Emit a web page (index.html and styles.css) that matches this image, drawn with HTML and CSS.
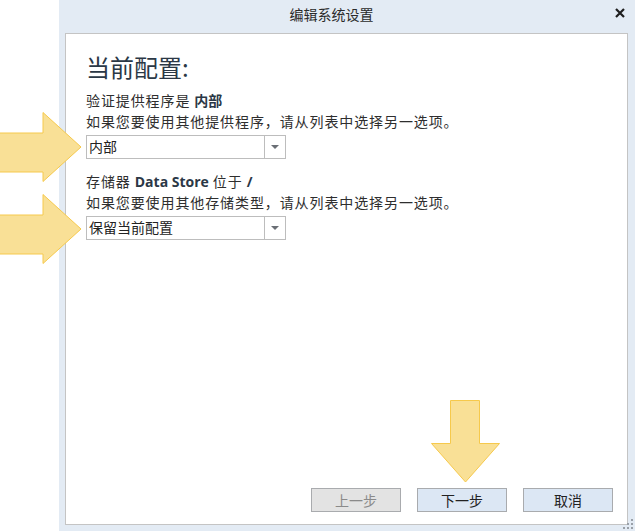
FILE: index.html
```html
<!DOCTYPE html>
<html lang="zh-CN">
<head>
  <meta charset="UTF-8">
  <title>编辑系统设置</title>
  <link rel="stylesheet" href="styles.css">
</head>
<body>
  <div class="screen">
    <div class="dialog">
      <div class="titlebar">
        <span class="title">编辑系统设置</span>
        <svg class="close" width="10" height="10" viewBox="0 0 10 10">
          <path d="M1 1 L9 9 M9 1 L1 9" stroke="#1e1e1e" stroke-width="2.2" fill="none"/>
        </svg>
      </div>

      <div class="panel">
        <h1>当前配置:</h1>

        <p>验证提供程序是 <b>内部</b></p>
        <p>如果您要使用其他提供程序，请从列表中选择另一选项。</p>
        <div class="combo">
          <span class="value">内部</span>
          <span class="drop"></span>
        </div>

        <p class="section">存储器 <b>Data Store</b> 位于 <b>/</b></p>
        <p>如果您要使用其他存储类型，请从列表中选择另一选项。</p>
        <div class="combo">
          <span class="value">保留当前配置</span>
          <span class="drop"></span>
        </div>

        <div class="buttons">
          <button class="btn" disabled>上一步</button>
          <button class="btn">下一步</button>
          <button class="btn">取消</button>
        </div>
      </div>

      <!-- uchwyt zmiany rozmiaru -->
      <svg class="grip" width="14" height="14" viewBox="0 0 14 14">
        <rect x="10" y="2" width="2" height="2"/>
        <rect x="6" y="6" width="2" height="2"/>
        <rect x="10" y="6" width="2" height="2"/>
        <rect x="2" y="10" width="2" height="2"/>
        <rect x="6" y="10" width="2" height="2"/>
        <rect x="10" y="10" width="2" height="2"/>
      </svg>
    </div>

    <!-- strzałki podpowiedzi -->
    <svg class="hint hint-1" width="84" height="72" viewBox="0 0 84 72">
      <path d="M-2 21 H43 V0.5 L81 35 L43 69.5 V60 H-2 Z" fill="#f9e096" stroke="#f6c94c" stroke-width="1"/>
    </svg>
    <svg class="hint hint-2" width="84" height="72" viewBox="0 0 84 72">
      <path d="M-2 21 H43 V0.5 L81 35 L43 69.5 V60 H-2 Z" fill="#f9e096" stroke="#f6c94c" stroke-width="1"/>
    </svg>
    <svg class="hint hint-down" width="72" height="84" viewBox="0 0 72 84">
      <path d="M19.5 0.5 H48.5 V43.5 H68.5 L34.5 82 L0.5 43.5 H19.5 Z" fill="#f9e096" stroke="#f6c94c" stroke-width="1"/>
    </svg>
  </div>
</body>
</html>
```

FILE: styles.css
```css
/* Reset */
* {
  box-sizing: border-box;
  margin: 0;
  padding: 0;
}

body {
  font-family: "Segoe UI", "Noto Sans CJK SC", "Noto Sans", sans-serif;
  background: #ffffff;
  color: #2e2e2e;
  width: 635px;
  height: 531px;
  overflow: hidden;
}

.screen {
  position: relative;
  display: flex;
  height: 531px;
  padding-left: 59px;
}

/* Okno dialogu */
.dialog {
  position: relative;
  flex: 1;
  display: flex;
  flex-direction: column;
  background: #e3ebf4;
  padding: 0 7px 6px 6px;
}

.titlebar {
  position: relative;
  height: 33px;
  display: flex;
  align-items: center;
  justify-content: center;
  padding-right: 30px;
  padding-bottom: 7px;
  padding-top: 1px;
}

.title {
  font-family: "Noto Sans CJK SC", sans-serif;
  font-size: 14px;
  line-height: 18px;
  color: #2a2a2a;
}

.close {
  position: absolute;
  right: 3px;
  top: 8px;
}

/* Panel z treścią */
.panel {
  flex: 1;
  display: flex;
  flex-direction: column;
  align-items: flex-start;
  background: #ffffff;
  border: 1px solid #c4c4c4;
  padding: 18px 14px 12px 20px;
}

h1 {
  font-family: "Noto Sans CJK SC", sans-serif;
  font-weight: 400;
  font-size: 24px;
  line-height: 30px;
  color: #2b3846;
  margin-bottom: 8px;
}

p {
  font-family: "Noto Sans CJK SC", sans-serif;
  font-size: 14px;
  letter-spacing: 0.9px;
  line-height: 21px;
  color: #2e2e2e;
}

p b {
  font-family: "Segoe UI", "Open Sans", "Noto Sans CJK SC", sans-serif;
  font-weight: 700;
  letter-spacing: 0;
  color: #2b3846;
}

.section {
  margin-top: 12px;
}

.combo {
  display: flex;
  width: 200px;
  height: 24px;
  border: 1px solid #bdbdbd;
  margin-top: 3px;
}

.combo .value {
  flex: 1;
  font-family: "Noto Sans CJK SC", sans-serif;
  font-size: 14px;
  line-height: 21px;
  padding-left: 2px;
  color: #222;
}

.combo .drop {
  width: 21px;
  border-left: 1px solid #bdbdbd;
  display: flex;
  align-items: center;
  justify-content: center;
}

.combo .drop::after {
  content: "";
  border-left: 4px solid transparent;
  border-right: 4px solid transparent;
  border-top: 4px solid #6a6f75;
}

/* Przyciski */
.buttons {
  margin-top: auto;
  align-self: flex-end;
  display: flex;
  gap: 16px;
}

.btn {
  width: 90px;
  height: 24px;
  background: #dce7f4;
  border: 1px solid #a9abae;
  font-family: "Noto Sans CJK SC", sans-serif;
  font-size: 14px;
  color: #222;
}

.btn:disabled {
  background: #e3e3e3;
  color: #8a8a8a;
}

.grip {
  position: absolute;
  right: 0;
  bottom: 0;
  fill: #9aa0a8;
}

/* Strzałki */
.hint {
  position: absolute;
}

.hint-1 {
  left: 0;
  top: 112px;
}

.hint-2 {
  left: 0;
  top: 194px;
}

.hint-down {
  left: 431px;
  top: 400px;
}
```
